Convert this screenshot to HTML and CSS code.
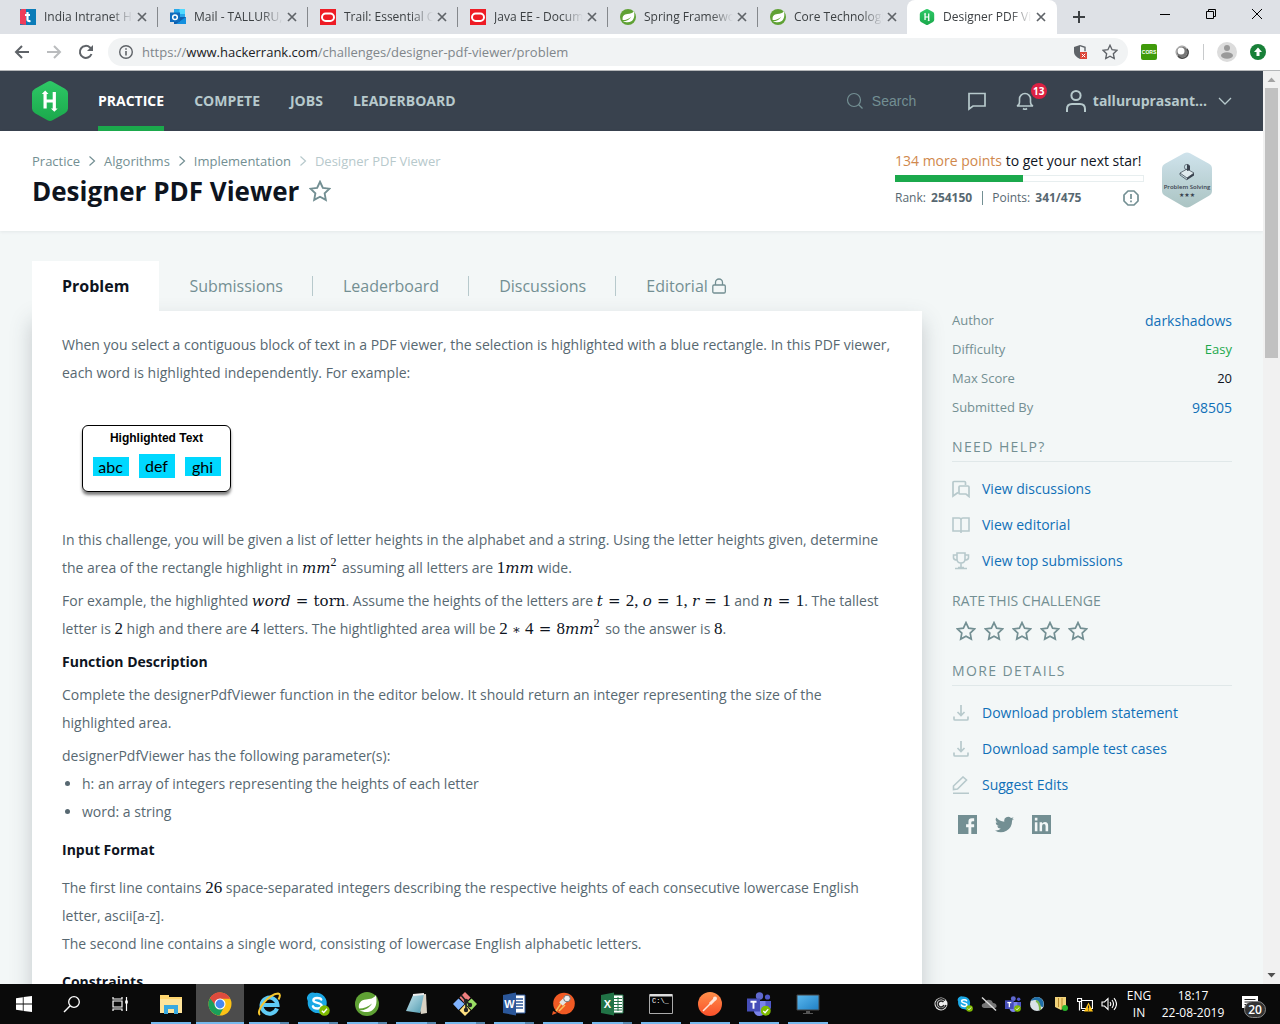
FILE: index.html
```html
<!DOCTYPE html>
<html lang="en">
<head>
<meta charset="utf-8">
<meta name="viewport" content="width=device-width, initial-scale=1">
<title>Designer PDF Viewer | HackerRank</title>
<link rel="stylesheet" href="styles.css">
</head>
<body>
<svg class="defs" aria-hidden="true">
  <defs>
    <linearGradient id="hexGreen" x1="0" y1="0" x2="0" y2="1"><stop offset="0" stop-color="#2ec866"/><stop offset="1" stop-color="#1ba94c"/></linearGradient>
    <linearGradient id="hexBlue" x1="0" y1="0" x2="0" y2="1"><stop offset="0" stop-color="#cfe3ec"/><stop offset="1" stop-color="#abc4c3"/></linearGradient>
    <linearGradient id="orange" x1="0" y1="0" x2="0" y2="1"><stop offset="0" stop-color="#ff8f4a"/><stop offset="1" stop-color="#f9502a"/></linearGradient>
    <linearGradient id="screen" x1="0" y1="0" x2="1" y2="1"><stop offset="0" stop-color="#5bb8ee"/><stop offset="1" stop-color="#1f7fc4"/></linearGradient>
    <linearGradient id="note" x1="0" y1="0" x2="1" y2="1"><stop offset="0" stop-color="#c9e6ee"/><stop offset="1" stop-color="#4e9ab0"/></linearGradient>
  </defs>
  <symbol id="star" viewBox="0 0 20 20"><path d="M10 1.6l2.6 5.5 6 .8-4.4 4.2 1.1 6-5.3-2.9-5.3 2.9 1.1-6L1.4 7.9l6-.8z" fill="none" stroke="currentColor" stroke-width="1.7"/></symbol>
  <symbol id="close" viewBox="0 0 16 16"><path d="M4 4l8 8M12 4l-8 8" stroke="#5f6368" stroke-width="1.7"/></symbol>
  <symbol id="chev" viewBox="0 0 8 12"><path d="M1.500 1.500L6.500 6 1.500 10.500" fill="none" stroke="currentColor" stroke-width="1.200"/></symbol>
  <symbol id="oracle" viewBox="0 0 16 16"><path fill="#ee1c25" d="M0 0h16v16H0z"/><rect x="2" y="4.500" width="12" height="7.500" rx="3.700" fill="none" stroke="#fff" stroke-width="2"/></symbol>
  <symbol id="spring" viewBox="0 0 24 24"><circle cx="12" cy="12" r="12" fill="#5fa134"/><path d="M21 3c1 6 1 12-4 15.500C13 21 8 20 4.500 18.500c6 0 10-3 12.500-7-4 3.500-8 5-13 5C3 11 6 8 11 7.500c4-.5 8-1 10-4.500z" fill="#fff"/></symbol>
  <symbol id="hr" viewBox="0 0 36 40"><path d="M15.500.8q2.500-1.400 5 0l12.500 7Q36 9.500 36 12.500v15q0 3-3 4.700l-12.500 7q-2.500 1.400-5 0L3 32.200Q0 30.500 0 27.500v-15Q0 9.500 3 7.800z" fill="url(#hexGreen)"/><path d="M11.500 27.500h3.200V21.500h6v6h-1.800l3.400 3.300 3.400-3.300h-1.800V11h-3.200v7.500h-6V13h1.800l-3.300-3.500L9.800 13h1.700z" fill="#fff"/></symbol>
  <symbol id="download" viewBox="0 0 18 18"><path d="M9 1v10M5.500 8L9 11.500 12.500 8M2 12.500v2.500q0 1 1 1h12q1 0 1-1v-2.500" fill="none" stroke="currentColor" stroke-width="1.700"/></symbol>
  <symbol id="tick" viewBox="0 0 12 12"><circle cx="6" cy="6" r="5.700" fill="#7fba00"/><path d="M3.200 6.200l2 2 3.600-4" fill="none" stroke="#fff" stroke-width="1.500"/></symbol>
  <symbol id="skype" viewBox="0 0 24 24"><path d="M1 7a6.500 6.500 0 0 1 9-6 11 11 0 0 1 12 14 6.500 6.500 0 0 1-9 7.800A11 11 0 0 1 2 10z" fill="#1ba8e5"/><path d="M16.500 8.200C15.500 6 8 5.500 8 9c0 3.700 9 2 9 6 0 3.800-8.500 3.500-9.500.5" fill="none" stroke="#fff" stroke-width="2.600" stroke-linecap="round"/></symbol>
  <symbol id="teams" viewBox="0 0 24 24"><circle cx="12.500" cy="4" r="3.700" fill="#6069ce"/><circle cx="20.500" cy="5" r="2.600" fill="#5059c9"/><path d="M17 9h7v7q-2 4-6 2z" fill="#5059c9"/><path d="M7 9h11.500v9q-1 6-6 6t-6-6z" fill="#7b83eb"/><path d="M0 6.500h13v13H0z" fill="#464eb8"/><path d="M3.500 9.800h6M6.500 9.800v7" stroke="#fff" stroke-width="1.900"/></symbol>
</svg>

<header class="browser">
  <div class="tabstrip">
    <div class="btab"><svg class="fav" viewBox="0 0 16 16"><path fill="#0b7cb8" d="M0 0h16v16H0z"/><path fill="#ef3e5b" d="M1.500 0H6v16L0 15V1.500z"/><path d="M7.500 3v7.500q0 2 3 1.500M5 6h5" fill="none" stroke="#fff" stroke-width="2.200"/></svg><span class="btitle">India Intranet Home</span><button class="x" aria-label="Close tab"><svg><use href="#close"/></svg></button></div>
    <div class="btab"><svg class="fav" viewBox="0 0 16 16"><path fill="#28a8ea" d="M4 0h11v9H4z"/><path fill="#50d9ff" d="M9.500 0H15v5H9.500z"/><path fill="#0f5fae" d="M4 8h12v7H4z"/><path fill="#1490df" d="M16 8v7H6z"/><path fill="#0f6cbd" d="M0 3.500h10v9.500H0z"/><circle cx="5" cy="8.200" r="2.300" fill="none" stroke="#fff" stroke-width="1.500"/></svg><span class="btitle">Mail - TALLURU, PRASANTH</span><button class="x" aria-label="Close tab"><svg><use href="#close"/></svg></button></div>
    <div class="btab"><svg class="fav"><use href="#oracle"/></svg><span class="btitle">Trail: Essential Classes</span><button class="x" aria-label="Close tab"><svg><use href="#close"/></svg></button></div>
    <div class="btab"><svg class="fav"><use href="#oracle"/></svg><span class="btitle">Java EE - Documentation</span><button class="x" aria-label="Close tab"><svg><use href="#close"/></svg></button></div>
    <div class="btab"><svg class="fav"><use href="#spring"/></svg><span class="btitle">Spring Framework</span><button class="x" aria-label="Close tab"><svg><use href="#close"/></svg></button></div>
    <div class="btab"><svg class="fav"><use href="#spring"/></svg><span class="btitle">Core Technologies</span><button class="x" aria-label="Close tab"><svg><use href="#close"/></svg></button></div>
    <div class="btab current"><svg class="fav"><use href="#hr"/></svg><span class="btitle">Designer PDF Viewer</span><button class="x" aria-label="Close tab"><svg><use href="#close"/></svg></button></div>
    <button class="newtab" aria-label="New tab"><svg width="14" height="14" viewBox="0 0 14 14"><path d="M7 1v12M1 7h12" stroke="#3c4043" stroke-width="2"/></svg></button>
    <div class="winbtns">
      <button aria-label="Minimize"><svg width="12" height="12"><path d="M1 6.500h10" stroke="#000"/></svg></button>
      <button aria-label="Restore"><svg width="12" height="12"><path d="M1.500 3.500h7v7h-7zM3.500 3.500v-2h7v7h-2" fill="none" stroke="#000"/></svg></button>
      <button aria-label="Close"><svg width="12" height="12"><path d="M1 1l10 10M11 1L1 11" stroke="#000"/></svg></button>
    </div>
  </div>
  <div class="toolbar">
    <button class="tool" aria-label="Back"><svg width="16" height="16" viewBox="0 0 16 16"><path d="M15 8H2M8 2L2 8l6 6" fill="none" stroke="#5f6368" stroke-width="2"/></svg></button>
    <button class="tool" aria-label="Forward"><svg width="16" height="16" viewBox="0 0 16 16"><path d="M1 8h13M8 2l6 6-6 6" fill="none" stroke="#babcbe" stroke-width="2"/></svg></button>
    <button class="tool" aria-label="Reload"><svg width="16" height="16" viewBox="0 0 16 16"><path d="M13.500 10A6 6 0 1 1 12 3.500l1.500 1.500" fill="none" stroke="#5f6368" stroke-width="2"/><path d="M15 1v6H9z" fill="#5f6368"/></svg></button>
    <div class="omnibox">
      <svg width="16" height="16" viewBox="0 0 16 16"><circle cx="8" cy="8" r="6.300" fill="none" stroke="#5f6368" stroke-width="1.400"/><path d="M8 7v4.500M8 4.200v1.600" stroke="#5f6368" stroke-width="1.600"/></svg>
      <span class="url">https://<b>www.hackerrank.com</b>/challenges/designer-pdf-viewer/problem</span>
      <svg width="16" height="16" viewBox="0 0 16 16"><path d="M8 1L2 3v5q0 4 6 7z" fill="#5f6368"/><path d="M8 1.700l5 1.600v4" fill="none" stroke="#5f6368" stroke-width="1.400"/><path d="M8 8h7v7H8z" fill="#db4437"/><path d="M9.800 9.800l3.400 3.400M13.200 9.800l-3.400 3.400" stroke="#fff"/></svg>
      <svg class="fav dark" width="16" height="16"><use href="#star"/></svg>
    </div>
    <svg class="fav ext" viewBox="0 0 16 16"><rect width="16" height="16" rx="2" fill="#3f9a0a"/><text x="8" y="10" class="cors" text-anchor="middle">CORS</text></svg>
    <svg class="fav" viewBox="0 0 16 16"><circle cx="8" cy="8" r="5.500" fill="#777"/><circle cx="8" cy="8" r="6" fill="none" stroke="#999"/><circle cx="7" cy="7" r="3.500" fill="#fff"/><path d="M13 5a5.500 5.500 0 0 1-9 7" fill="none" stroke="#4a4a4a" stroke-width="1.500"/></svg>
    <span class="bar"></span>
    <svg width="20" height="20" viewBox="0 0 20 20"><circle cx="10" cy="10" r="10" fill="#dcdcdc"/><circle cx="10" cy="6" r="3" fill="#999"/><ellipse cx="10" cy="13.500" rx="6" ry="3.200" fill="#999"/></svg>
    <svg class="fav" viewBox="0 0 16 16"><circle cx="8" cy="8" r="8" fill="#188038"/><path d="M8 3.500L12 8H9.500v4h-3V8H4z" fill="#fff"/></svg>
  </div>
</header>

<div class="viewport">
  <div class="page">
    <nav class="topnav">
      <a class="logo" href="#" aria-label="HackerRank"><svg width="36" height="40"><use href="#hr"/></svg></a>
      <div class="links"><a class="on" href="#">PRACTICE</a><a href="#">COMPETE</a><a href="#">JOBS</a><a href="#">LEADERBOARD</a></div>
      <label class="search"><svg width="18" height="18" viewBox="0 0 18 18"><circle cx="8" cy="8" r="6.500" fill="none" stroke="#738f93" stroke-width="1.200"/><path d="M12.500 12.500l4 4" stroke="#738f93" stroke-width="1.200"/></svg><input type="text" placeholder="Search" aria-label="Search"></label>
      <button class="ic" aria-label="Messages"><svg width="20" height="20" viewBox="0 0 20 20"><path d="M2 2.500h16v12.500H6L2 18z" fill="none" stroke="#b7c9cc" stroke-width="1.700"/></svg></button>
      <button class="ic bell" aria-label="Notifications"><svg width="20" height="20" viewBox="0 0 20 20"><path d="M2 15q2.500-1 2.500-4V8a5.500 5.500 0 0 1 11 0v3q0 3 2.500 4zM8 17.500q2 1.500 4 0" fill="none" stroke="#b7c9cc" stroke-width="1.600"/></svg><span class="badge">13</span></button>
      <button class="user"><svg width="22" height="24" viewBox="0 0 22 24"><circle cx="11" cy="6.500" r="4.600" fill="none" stroke="#b7c9cc" stroke-width="2"/><path d="M2 23v-3q0-5 5-5h8q5 0 5 5v3" fill="none" stroke="#b7c9cc" stroke-width="2"/></svg><span>talluruprasant...</span><svg width="14" height="10" viewBox="0 0 14 10"><path d="M1 2l6 6 6-6" fill="none" stroke="#b7c9cc" stroke-width="1.300"/></svg></button>
    </nav>

    <section class="head">
      <div>
        <div class="crumbs"><a href="#">Practice</a><svg><use href="#chev"/></svg><a href="#">Algorithms</a><svg><use href="#chev"/></svg><a href="#">Implementation</a><svg class="pale"><use href="#chev"/></svg><span class="pale">Designer PDF Viewer</span></div>
        <div class="title"><h1>Designer PDF Viewer</h1><button aria-label="Bookmark"><svg width="22" height="22"><use href="#star"/></svg></button></div>
      </div>
      <div class="rank">
        <div class="next"><em>134 more points</em> to get your next star!</div>
        <div class="meter"><i></i></div>
        <div class="nums"><span>Rank: <b>254150</b></span><span class="sep"></span><span>Points: <b>341/475</b></span><svg width="16" height="16" viewBox="0 0 16 16"><path d="M5 1h6l4 4v6l-4 4H5l-4-4V5z" fill="none" stroke="#738f93" stroke-width="1.700" stroke-linejoin="round"/><path d="M8 4v5M8 10.500v1.700" stroke="#738f93" stroke-width="1.700"/></svg></div>
      </div>
      <svg class="solve" width="50" height="56" viewBox="0 0 50 56"><path d="M22 1.200q3-1.500 6 0l19 10.500q3 1.700 3 5v22q0 3.300-3 5L28 54.800q-3 1.500-6 0L3 43.700q-3-1.700-3-5v-22q0-3.300 3-5z" fill="url(#hexBlue)"/><path d="M18 21l7-4 7 4-7 5z" fill="#dfeaed" stroke="#39424e" stroke-width=".7"/><path d="M25 26l7-5v2.500L25 28zM25 12l3 2v4l-3 1z" fill="#39424e"/><circle cx="25" cy="15" r="2.700" fill="none" stroke="#39424e" stroke-width=".6"/><path d="M18 21v2l7 5" fill="none" stroke="#39424e" stroke-width=".7"/><text x="25" y="37" text-anchor="middle" class="solvetext">Problem Solving</text><text x="25" y="45" text-anchor="middle" class="solvestars">★★★</text></svg>
    </section>

    <main class="body">
      <div class="left">
        <nav class="tabs"><a class="on" href="#">Problem</a><a href="#">Submissions</a><a href="#">Leaderboard</a><a href="#">Discussions</a><a href="#">Editorial<svg width="16" height="16" viewBox="0 0 16 16"><rect x="1.800" y="7" width="12.500" height="8" rx="1.200" fill="none" stroke="currentColor" stroke-width="1.300"/><path d="M4.500 7V4.500a3.500 3.500 0 0 1 7 0V7" fill="none" stroke="currentColor" stroke-width="1.300"/></svg></a></nav>
        <article class="panel">
          <p>When you select a contiguous block of text in a PDF viewer, the selection is highlighted with a blue rectangle. In this PDF viewer, each word is highlighted independently. For example:</p>
          <figure class="sample"><figcaption>Highlighted Text</figcaption><div class="words"><span>abc</span><span class="tall">def</span><span>ghi</span></div></figure>
          <p>In this challenge, you will be given a list of letter heights in the alphabet and a string. Using the letter heights given, determine the area of the rectangle highlight in <span class="m"><i>mm</i><sup>2</sup></span> assuming all letters are <span class="m">1<i>mm</i></span> wide.</p>
          <p>For example, the highlighted <span class="m"><i>word</i> <b>=</b> <u>torn</u></span>. Assume the heights of the letters are <span class="m"><i>t</i> <b>=</b> 2, <i>o</i> <b>=</b> 1, <i>r</i> <b>=</b> 1</span> and <span class="m"><i>n</i> <b>=</b> 1</span>. The tallest letter is <span class="m">2</span> high and there are <span class="m">4</span> letters. The hightlighted area will be <span class="m">2 <b class="times">∗</b> 4 <b>=</b> 8<i>mm</i><sup>2</sup></span> so the answer is <span class="m">8</span>.</p>
          <h2>Function Description</h2>
          <p>Complete the designerPdfViewer function in the editor below. It should return an integer representing the size of the highlighted area.</p>
          <p>designerPdfViewer has the following parameter(s):</p>
          <ul><li>h: an array of integers representing the heights of each letter</li><li>word: a string</li></ul>
          <h2 class="sect">Input Format</h2>
          <p>The first line contains <span class="m">26</span> space-separated integers describing the respective heights of each consecutive lowercase English letter, ascii[a-z].<br>The second line contains a single word, consisting of lowercase English alphabetic letters.</p>
          <h2 class="sect">Constraints</h2>
        </article>
      </div>
      <aside class="side">
        <dl><div><dt>Author</dt><dd><a href="#">darkshadows</a></dd></div><div><dt>Difficulty</dt><dd class="easy">Easy</dd></div><div><dt>Max Score</dt><dd>20</dd></div><div><dt>Submitted By</dt><dd><a href="#">98505</a></dd></div></dl>
        <h3>NEED HELP?</h3>
        <ul class="acts">
          <li><a href="#"><svg viewBox="0 0 18 18"><path d="M6 12.500L1 16V2.500q0-1 1-1h10.500q1 0 1 1V5M7.500 6h8.500q1 0 1 1v9.500l-3-2.500H8q-1 0-1-1V7q0-1 1-1" fill="none" stroke="currentColor" stroke-width="1.700"/></svg>View discussions</a></li>
          <li><a href="#"><svg viewBox="0 0 18 18"><path d="M9 17v-2H1V2h6q2 0 2 2v11h8V2h-6q-2 0-2 2" fill="none" stroke="currentColor" stroke-width="1.600"/></svg>View editorial</a></li>
          <li><a href="#"><svg viewBox="0 0 18 18"><path d="M5 1h8v6q0 4-4 4T5 7zM5 3H1.500v3Q2 8 5 8M13 3h3.500v3Q16 8 13 8M9 11v4M3 16.500h12M6 15.500h6" fill="none" stroke="currentColor" stroke-width="1.600"/></svg>View top submissions</a></li>
        </ul>
        <div class="rate"><span>RATE THIS CHALLENGE</span><div class="stars"><button aria-label="1 star"><svg><use href="#star"/></svg></button><button aria-label="2 stars"><svg><use href="#star"/></svg></button><button aria-label="3 stars"><svg><use href="#star"/></svg></button><button aria-label="4 stars"><svg><use href="#star"/></svg></button><button aria-label="5 stars"><svg><use href="#star"/></svg></button></div></div>
        <h3>MORE DETAILS</h3>
        <ul class="acts">
          <li><a href="#"><svg><use href="#download"/></svg>Download problem statement</a></li>
          <li><a href="#"><svg><use href="#download"/></svg>Download sample test cases</a></li>
          <li><a href="#"><svg viewBox="0 0 18 18"><path d="M1 17.200h16M1.500 13.500v-3.500L11 1l3.500 3L5.500 13z" fill="none" stroke="currentColor" stroke-width="1.600"/></svg>Suggest Edits</a></li>
        </ul>
        <div class="social">
          <a href="#" aria-label="Facebook"><svg viewBox="0 0 20 20"><path d="M0 0h20v20h-6v-7h3V9.800h-3V8q0-1.500 1.500-1.500H17V3.500h-2.500Q11 3.500 11 7v2.800H8.500V13H11v7H0z" fill="currentColor"/></svg></a>
          <a href="#" aria-label="Twitter"><svg viewBox="0 0 24 24"><path d="M24 4.600a10 10 0 0 1-2.800.8 5 5 0 0 0 2.100-2.700 10 10 0 0 1-3.100 1.200 4.900 4.900 0 0 0-8.400 4.500A14 14 0 0 1 1.700 3.100a4.900 4.900 0 0 0 1.500 6.600 5 5 0 0 1-2.200-.6 4.900 4.900 0 0 0 3.900 4.900 5 5 0 0 1-2.200.1 4.900 4.900 0 0 0 4.600 3.400A9.900 9.900 0 0 1 0 19.500a14 14 0 0 0 21.500-12.400A10 10 0 0 0 24 4.600z" fill="currentColor"/></svg></a>
          <a href="#" aria-label="LinkedIn"><svg viewBox="0 0 20 20"><path d="M0 0h20v20H0z" fill="currentColor"/><path d="M3 7.500h2.700V17H3zM3 3h2.700v2.700H3zM8 7.500h2.600V9q1-1.700 3-1.700Q17 7.300 17 11v6h-2.700v-5.500q0-2-1.700-2-2 0-2 2V17H8z" fill="#f3f7f7"/></svg></a>
        </div>
      </aside>
    </main>
  </div>
  <div class="scroll" aria-hidden="true"><svg width="17" height="17"><path d="M4.500 11l4-4.500 4 4.500z" fill="#a3a3a3"/></svg><span class="thumb"></span><svg class="down" width="17" height="17"><path d="M4.500 6l4 4.500 4-4.500z" fill="#505050"/></svg></div>
</div>

<footer class="taskbar">
  <button class="sys" aria-label="Start"><svg width="16" height="16" viewBox="0 0 16 16"><path d="M0 2.200L6.800 1.200v6.400H0zM7.600 1.100L16 0v7.600H7.600zM0 8.400h6.800v6.400L0 13.800zM7.600 8.400H16V16l-8.400-1.100z" fill="#fff"/></svg></button>
  <button class="sys" aria-label="Search"><svg width="18" height="18" viewBox="0 0 18 18"><circle cx="11" cy="7" r="5.300" fill="none" stroke="#fff" stroke-width="1.300"/><path d="M7.200 10.800L1 17" stroke="#fff" stroke-width="1.400"/></svg></button>
  <button class="sys" aria-label="Task view"><svg width="17" height="16" viewBox="0 0 17 16"><path d="M1 1v2h9V1M1 15v-2h9v2M1 5h9v6H1zM14.500 1v14" fill="none" stroke="#fff" stroke-width="1.200"/><path d="M13.200 4.500h2.600v3h-2.600z" fill="#fff"/></svg></button>
  <div class="apps">
    <button class="run" aria-label="File Explorer"><svg viewBox="0 0 24 24"><path d="M1 3h9v2h13v16H1z" fill="#ffd66f"/><path d="M1 7h22v14H1z" fill="#ffe49a"/><path d="M5 13h14v9h-4v-5H9v5H5z" fill="#39a9e0"/></svg></button>
    <button class="run front" aria-label="Chrome"><svg viewBox="0 0 24 24"><circle cx="12" cy="12" r="11.500" fill="#fbc116"/><path d="M12 12L2 6.200A11.500 11.500 0 0 1 22 6.500H12z" fill="#dd4b3e"/><path d="M2 6.200a11.500 11.500 0 0 0 9.500 17.300L16 15l-4-3z" fill="#1a9f5a"/><path d="M2 6.200A11.500 11.500 0 0 1 22 6.500H12L8 14z" fill="#dd4b3e"/><circle cx="12" cy="12" r="5.500" fill="#fff"/><circle cx="12" cy="12" r="4.400" fill="#4688f1"/></svg></button>
    <button class="run multi" aria-label="Internet Explorer"><svg viewBox="0 0 24 24"><path d="M20 16.500A8 8 0 1 1 20.500 13H6" fill="none" stroke="#5fcbf5" stroke-width="4"/><path d="M3 23C-2 19 12 2 21 1.500q3.500.5.500 6" fill="none" stroke="#f6c62d" stroke-width="2"/></svg></button>
    <button class="run multi" aria-label="Skype"><svg viewBox="0 0 26 26"><use href="#skype" width="24" height="24"/><use href="#tick" x="14" y="14" width="12" height="12"/></svg></button>
    <button class="run multi" aria-label="Spring Tools"><svg viewBox="0 0 24 24"><use href="#spring"/></svg></button>
    <button class="run multi" aria-label="Notepad"><svg viewBox="0 0 24 24"><path d="M12 3l10-1 1 19-6 1z" fill="#d9d2c4"/><path d="M9 3l11-1-4 19-14-2z" fill="url(#note)"/><path d="M9 3l11-1" stroke="#eee" stroke-width="2"/></svg></button>
    <button class="run multi" aria-label="Git"><svg viewBox="0 0 24 24"><path d="M12 0l5.500 5.500-5.500 6-5.500-6z" fill="#f07f7f"/><path d="M5.500 6.500l6 5.500-6 6L0 12z" fill="#80b3ff"/><path d="M18.500 6.500L24 12l-5.500 6-6-6z" fill="#9ade64"/><path d="M12 12.500l5.500 6L12 24l-5.500-5.500z" fill="#ffe080"/><path d="M8 3l5 6v9M13 9l4 4" fill="none" stroke="#222" stroke-width="1.700"/><circle cx="13" cy="9" r="2.200" fill="#222"/><circle cx="17" cy="13" r="2.200" fill="#222"/><circle cx="13" cy="18" r="2.200" fill="#222"/></svg></button>
    <button class="run multi" aria-label="Word"><svg viewBox="0 0 24 24"><path d="M12 3h11v18H12z" fill="#fff" stroke="#2b579a"/><path d="M14 7h7M14 10h7M14 13h7M14 16h7" stroke="#2b579a" stroke-width="1.500"/><path d="M1 3l13-2.500v23L1 21z" fill="#2b579a"/><text x="7.500" y="16" text-anchor="middle" class="office">W</text></svg></button>
    <button class="run" aria-label="Postman"><svg viewBox="0 0 24 24"><circle cx="13" cy="11.500" r="10.800" fill="#f15a24"/><path d="M1 23l1-4 4 2z" fill="#f15a24"/><path d="M5 19l6-9M8 19l6-6" stroke="#f9c05a" stroke-width="1.500"/><path d="M10 12l6-6" stroke="#e5e5e5" stroke-width="5"/><circle cx="16" cy="6.500" r="3.300" fill="#eee" stroke="#777"/></svg></button>
    <button class="run multi" aria-label="Excel"><svg viewBox="0 0 24 24"><path d="M12 3h11v18H12z" fill="#fff" stroke="#217346"/><path d="M14 6.500h8M14 9.500h8M14 12.500h8M14 15.500h8M14 18h8M18 5v14" stroke="#217346"/><path d="M1 3l13-2.500v23L1 21z" fill="#217346"/><text x="7.500" y="16" text-anchor="middle" class="office">X</text></svg></button>
    <button class="run" aria-label="Command Prompt"><svg viewBox="0 0 24 24"><path d="M.5 2.500h23v19H.5z" fill="#050505" stroke="#aaa"/><path d="M1 2h22v2.500H1z" fill="#ddd"/><text x="3" y="11" class="cmd">C:\_</text></svg></button>
    <button class="run" aria-label="Postman"><svg viewBox="0 0 24 24"><circle cx="12" cy="12" r="12" fill="url(#orange)"/><path d="M5 19l7-7M10 14l4-4" stroke="#ffe5d8" stroke-width="1.500"/><path d="M12 12l5-5" stroke="#ffe5d8" stroke-width="3"/><circle cx="17" cy="6.500" r="2" fill="#ffe5d8"/></svg></button>
    <button class="run" aria-label="Teams"><svg viewBox="0 0 24 24"><use href="#teams"/><use href="#tick" x="13.500" y="13.500" width="10.500" height="10.500"/></svg></button>
    <button class="run" aria-label="Remote Desktop"><svg viewBox="0 0 24 24"><path d="M1 3h22v15H1z" fill="url(#screen)" stroke="#444"/><path d="M10 19h4v2h-4zM7 21h10v1H7z" fill="#555"/></svg></button>
  </div>
  <div class="tray">
    <svg viewBox="0 0 16 16"><circle cx="8" cy="8" r="6.500" fill="#eee"/><path d="M12 4.500A5 5 0 1 0 13 9M10.500 6a3 3 0 1 0 .5 3" fill="none" stroke="#222" stroke-width="1.400"/></svg>
    <svg viewBox="0 0 16 16"><use href="#skype" width="14" height="14"/><use href="#tick" x="9" y="9" width="7" height="7"/></svg>
    <svg viewBox="0 0 16 16"><path d="M3 12q-3-1-2-3.500Q2 7 4 7q1-4 5-3 2 0 3 3 3 0 3.500 2.500T13 12z" fill="#777"/><path d="M1 1.500l14 13" stroke="#ddd" stroke-width="1.400"/></svg>
    <svg viewBox="0 0 16 16"><use href="#teams"/><use href="#tick" x="9" y="9" width="7" height="7"/></svg>
    <svg viewBox="0 0 16 16"><circle cx="8" cy="8" r="7" fill="#d9e2e6"/><path d="M2 5q6-3 8 2 1 4 4 4A7 7 0 0 0 8 1Q4 1 2 5z" fill="#1f6fa8"/><path d="M7 5q4 1 4 9" fill="none" stroke="#7ab648" stroke-width="2"/></svg>
    <svg viewBox="0 0 16 16"><path d="M2 1h11v9l-5 4-6-3z" fill="#f1d27a"/><path d="M5.500 2v9M9 2v11" stroke="#b8892c"/><circle cx="12" cy="12" r="3" fill="#2bb52b"/></svg>
    <svg viewBox="0 0 16 16"><path d="M.5 2.500h4v3h-4zM4.500 4.500h11v8h-11zM2.500 5.500v9M5 14.500h5" fill="none" stroke="#fff" stroke-width="1.200"/><path d="M11.500 6.500l4.500 9H7z" fill="#fdc116"/><path d="M11.500 9.500v3M11.500 13.500v1" stroke="#222"/></svg>
    <svg viewBox="0 0 16 16"><path d="M1 6h2.500l3.500-3.500v11L3.500 10H1zM9 6q1.500 2 0 4M11 4q3 4 0 8M13 2.200q5 5.800 0 11.600" fill="none" stroke="#fff" stroke-width="1.100"/></svg>
    <div class="lang">ENG<br>IN</div>
    <div class="clock">18:17<br>22-08-2019</div>
    <div class="notif"><svg width="18" height="18" viewBox="0 0 18 18"><path d="M1 1h16v12H8v4l-4-4H1z" fill="#fff"/><path d="M3.500 4.500h11M3.500 7h11M3.500 9.500h11" stroke="#222"/></svg><span>20</span></div>
  </div>
</footer>
</body>
</html>
```
FILE: styles.css
```css
* { box-sizing: border-box; }
body { margin: 0; height: 100vh; display: flex; flex-direction: column; overflow: hidden; font: 14px/28px "Open Sans", "Noto Sans", sans-serif; color: #576871; background: #f3f7f7; }
button { border: 0; padding: 0; background: none; color: inherit; font: inherit; display: flex; align-items: center; justify-content: center; }
a { color: #1070b8; text-decoration: none; }
h1, h2, h3, p, ul, dl, dd, figure { margin: 0; padding: 0; }
svg { flex: none; display: block; }
.defs { position: absolute; width: 0; height: 0; }

/* browser window */
.browser { flex: none; background: #dee1e6; border-bottom: 1px solid #b5b7b9; color: #3c4043; }
.tabstrip { display: flex; height: 34px; padding-left: 8px; }
.btab { flex: 0 1 150px; min-width: 0; display: flex; align-items: center; padding: 0 7px 0 12px; background: linear-gradient(#85888c, #85888c) right 7px / 1px 20px no-repeat; }
.btab:nth-child(6), .btab.current { background-image: none; }
.btab.current { background-color: #fff; border-radius: 8px 8px 0 0; margin-left: -1px; }
.fav { width: 16px; height: 16px; }
.dark { color: #5f6368; }
.btitle { flex: 1; margin-left: 8px; font-size: 12px; line-height: 16px; white-space: nowrap; overflow: hidden; -webkit-mask-image: linear-gradient(90deg, #000 75%, transparent); mask-image: linear-gradient(90deg, #000 75%, transparent); }
.x { width: 18px; }
.x svg { width: 16px; height: 16px; }
.newtab { width: 44px; }
.winbtns { margin-left: auto; display: flex; }
.winbtns button { width: 46px; height: 28px; }
.toolbar { display: flex; align-items: center; height: 36px; background: #fff; padding: 0 14px 0 6px; gap: 13px; }
.tool { width: 32px; margin-right: -13px; }
.tool + .omnibox { margin-left: 6px; }
.omnibox { flex: 1; min-width: 0; display: flex; align-items: center; gap: 14px; height: 28px; padding: 0 10px; border-radius: 14px; background: #f1f3f4; }
.url { flex: 1; margin-left: -6px; font-size: 13px; color: #80868b; white-space: nowrap; overflow: hidden; }
.url b { font-weight: 400; color: #202124; }
.cors { font: bold 5px "Liberation Sans", sans-serif; fill: #fff; }
.ext { margin-right: 4px; }
.bar { width: 1px; height: 16px; background: #c8cacc; }

/* page */
.viewport { flex: 1; min-height: 0; display: flex; }
.page { flex: 1; min-width: 0; overflow: hidden; }
.scroll { flex: none; width: 17px; background: #f1f1f1; display: flex; flex-direction: column; align-items: center; }
.thumb { width: 13px; height: 270px; background: #c1c1c1; }
.down { margin-top: auto; }

.topnav { display: flex; align-items: center; height: 60px; padding: 0 31px 0 32px; background: #39424e; }
.links { display: flex; gap: 30px; margin: 0 auto 0 30px; }
.links a { display: flex; align-items: center; height: 60px; font-weight: 700; color: #b7c9cc; border: solid transparent; border-width: 5px 0; }
.links .on { color: #fff; border-bottom-color: #1ba94c; }
.search { display: flex; align-items: center; gap: 8px; margin-right: 23px; }
.search input { width: 72px; border: 0; padding: 0; background: none; color: #fff; font: 14px "Liberation Sans", sans-serif; outline: 0; }
.search input::placeholder { color: #738f93; opacity: 1; }
.ic { width: 20px; height: 28px; margin-right: 28px; }
.bell { position: relative; margin-right: 30px; }
.badge { position: absolute; left: 16px; top: -4px; width: 16px; height: 16px; border-radius: 8px; background: #dc2143; color: #fff; font-size: 10px; font-weight: 700; line-height: 16px; }
.user { gap: 6px; color: #b7c9cc; font-weight: 700; }
.user svg:last-child { margin-left: 5px; }

.head { display: flex; height: 100px; padding: 16px 51px 0 32px; background: #fff; box-shadow: 0 1px 3px rgba(57, 66, 78, .08); }
.head > div:first-child { flex: 1; }
.crumbs { display: flex; align-items: center; font-size: 13px; height: 28px; color: #738f93; }
.crumbs a { color: #738f93; }
.crumbs svg { width: 8px; height: 12px; margin: 0 8px; }
.crumbs .pale { color: #b7c9cc; }
.title { display: flex; align-items: center; gap: 10px; color: #738f93; }
h1 { font-size: 26px; line-height: 32px; font-weight: 700; color: #0e141e; }
.rank { width: 249px; margin-right: 18px; }
.next { color: #0e141e; font-size: 14px; }
.next em { font-style: normal; color: #d0884c; }
.meter { height: 7px; border: 1px solid #e7eeef; }
.meter i { display: block; width: 128px; height: 7px; margin: -1px; background: #1ba94c; }
.nums { display: flex; align-items: center; font-size: 12px; padding-top: 2px; }
.nums b { margin-left: 2px; }
.nums .sep { width: 1px; height: 14px; background: #738f93; margin: 0 9px 0 10px; }
.nums svg { margin: 0 5px 0 auto; }
.solve { margin-top: 5px; }
.solvetext { font: 600 6px "Open Sans", sans-serif; fill: #39424e; }
.solvestars { font: 6px "DejaVu Sans", sans-serif; fill: #39424e; }

.body { display: flex; gap: 30px; padding: 30px 31px 0 32px; }
.left { flex: 1; min-width: 0; }
.tabs { display: flex; align-items: center; height: 50px; font-size: 16px; }
.tabs a { display: flex; align-items: center; gap: 3px; height: 20px; padding: 0 29px 0 30px; color: #738f93; border-left: 1px solid #b7c9cc; }
.tabs .on { height: 50px; padding: 0 30px; background: #fff; color: #0e141e; font-weight: 700; border: 0; position: relative; z-index: 1; }
.tabs .on + a { border: 0; }
.panel { background: #fff; padding: 20px 30px 400px; margin-bottom: 30px; box-shadow: 0 10px 20px rgba(57, 66, 78, .25); }
.panel p + p, .panel p + h2, .panel h2 + p { margin-top: 5px; }
.panel h2 { font-size: 14px; font-weight: 700; color: #0e141e; }
.panel .sect, .panel .sect + p { margin-top: 10px; }
.panel ul { padding-left: 20px; }
.sample { width: 149px; height: 67px; border: 1px solid #000; border-radius: 6px; box-shadow: 0 3px 3px rgba(0, 0, 0, .5); text-align: center; }
.panel .sample { margin: 38px 20px 34px; }
.sample figcaption { font: bold 12px/24px "Liberation Sans", sans-serif; color: #000; }
.words { display: flex; justify-content: center; align-items: center; gap: 10px; height: 32px; }
.words span { width: 36px; background: #00d8ff; color: #000; font: 16px/19px Lato, sans-serif; }
.words .tall { line-height: 24px; }

/* inline maths */
.m { font: 17px/20px "Liberation Serif", serif; color: #0e141e; white-space: nowrap; }
.m i, .m u, .m b { font: italic 15px/20px "DejaVu Serif", serif; text-decoration: none; }
.m u, .m b { font-style: normal; }
.m b { margin: 0 1px; }
.m .times { font-size: 13px; margin: 0; }
.m sup { font-size: 12px; line-height: 0; margin-right: 2px; }

.side { width: 280px; flex: none; padding-top: 45px; }
.side dl { font-size: 13px; line-height: 29px; color: #738f93; }
.side dl div { display: flex; justify-content: space-between; height: 29px; }
.side dd { color: #0e141e; }
.side dd a { font-size: 14px; }
.side .easy { color: #1ba94c; }
.side h3 { margin-top: 11px; height: 29px; font-size: 14px; font-weight: 400; letter-spacing: .1em; color: #738f93; border-bottom: 1px solid #e0e8e9; }
.acts { list-style: none; padding-top: 9px; }
.acts a { display: flex; align-items: center; gap: 12px; height: 36px; }
.acts svg { width: 18px; height: 18px; color: #b7c9cc; }
.rate { color: #738f93; padding-top: 8px; }
.stars { display: flex; gap: 8px; padding: 6px 0 4px 4px; }
.stars svg { width: 20px; height: 20px; }
.rate + h3 { margin-top: 12px; }
.social { display: flex; gap: 18px; padding: 12px 6px; }
.social a { color: #738f93; }
.social svg { width: 19px; height: 19px; }

/* desktop taskbar */
.taskbar { flex: none; display: flex; height: 40px; background: #0a0a0a; color: #fff; }
.sys { width: 48px; height: 40px; }
.apps { display: flex; margin-left: 3px; }
.run { width: 49px; height: 40px; padding-right: 1px; background: linear-gradient(#76b9ed, #76b9ed) 4px 38px / 40px 2px no-repeat; }
.run svg { width: 24px; height: 24px; }
.multi { background: linear-gradient(90deg, #76b9ed 78%, #5587ae 78%) 4px 38px / 40px 2px no-repeat; }
.front { background: linear-gradient(#76b9ed, #76b9ed) 0 38px / 48px 2px no-repeat, linear-gradient(#4c4c4c, #4c4c4c) 0 0 / 48px 40px no-repeat; }
.office { font: bold 11px "Liberation Sans", sans-serif; fill: #fff; }
.cmd { font: 7px "Liberation Mono", monospace; fill: #fff; }
.tray { margin-left: auto; display: flex; align-items: center; gap: 8px; padding-right: 21px; font-size: 12px; line-height: 17px; text-align: center; }
.tray > svg { width: 16px; height: 16px; }
.lang { width: 28px; }
.clock { width: 64px; }
.notif { position: relative; margin-left: 8px; }
.notif span { position: absolute; left: 3px; top: 6px; width: 22px; height: 17px; border: 1px solid #888; border-radius: 9px; background: #333; font-weight: 600; line-height: 15px; }
```
